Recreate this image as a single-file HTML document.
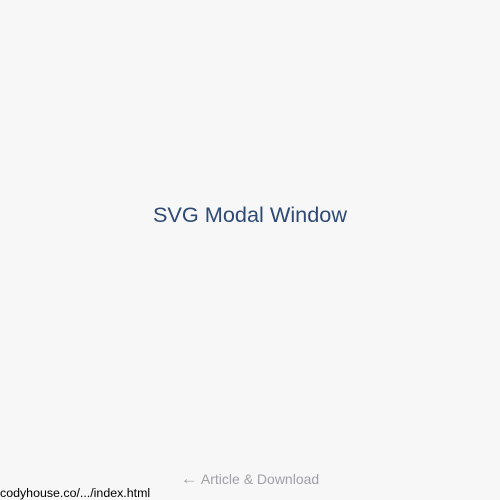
<!DOCTYPE html>
<html><head><style>
html,body{margin:0;padding:0;width:500px;height:500px;background:#f7f7f7;overflow:hidden;font-family:"Liberation Sans",sans-serif;}
h1{position:absolute;left:0;width:500px;top:202px;margin:0;text-align:center;font-size:21.7px;font-weight:normal;color:#2d4a76;line-height:26px;}
.a{position:absolute;left:0;width:500px;top:470px;text-align:center;font-size:14px;color:#a0a0a6;line-height:18px;}
.a span{font-size:17px;}
.s{position:absolute;left:0;top:486px;font-size:12.4px;color:#000;background:#f7f7f7;line-height:14px;padding-right:2px;}
</style></head><body>
<h1>SVG Modal Window</h1>
<div class="a"><span>←</span> Article &amp; Download</div>
<div class="s">codyhouse.co/.../index.html</div>
</body></html>
